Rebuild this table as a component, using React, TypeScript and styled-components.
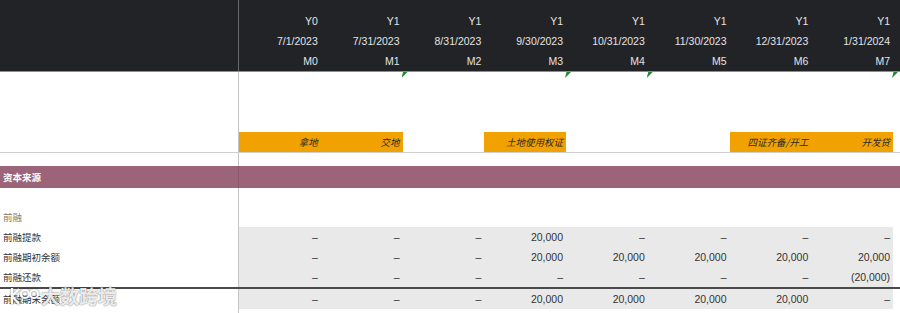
import React from "react";
import styled, { createGlobalStyle, css } from "styled-components";

const Global = createGlobalStyle`
  html, body { margin: 0; padding: 0; background: #ffffff; }
  body { font-family: "Liberation Sans", "Noto Sans CJK SC", sans-serif; }
`;

const COL = 81.75;
const LABEL = 239;

const Sheet = styled.div`
  position: relative;
  width: 900px;
  height: 313px;
  overflow: hidden;
  background: #ffffff;
`;

const Row = styled.div<{ $h: number; $bg?: string; $borderBottom?: string; $borderTop?: string }>`
  display: flex;
  flex: 0 0 auto;
  height: ${(p) => p.$h}px;
  box-sizing: border-box;
  background: ${(p) => p.$bg || "transparent"};
  ${(p) => p.$borderBottom && css`border-bottom: ${p.$borderBottom};`}
  ${(p) => p.$borderTop && css`border-top: ${p.$borderTop};`}
`;

const Label = styled.div<{ $line?: string; $color?: string; $bold?: boolean }>`
  flex: 0 0 ${LABEL}px;
  box-sizing: border-box;
  border-right: 1px solid ${(p) => p.$line || "#c4c4c4"};
  padding-left: 3px;
  display: flex;
  align-items: center;
  font-family: "Noto Sans CJK SC", sans-serif;
  font-size: 9.5px;
  color: ${(p) => p.$color || "#333"};
  font-weight: ${(p) => (p.$bold ? 700 : 400)};
`;

const Cells = styled.div<{ $bg?: string }>`
  display: grid;
  grid-template-columns: repeat(8, ${COL}px);
  background: ${(p) => p.$bg || "transparent"};
`;

const Cell = styled.div`
  position: relative;
  box-sizing: border-box;
  padding-right: 3px;
  display: flex;
  align-items: center;
  justify-content: flex-end;
  font-size: 10.5px;
  color: #333;
  white-space: nowrap;
`;

const Header = styled.div`
  display: flex;
  flex-direction: column;
  height: 72px;
  box-sizing: border-box;
  background-color: #222327;
  border-bottom: 1px solid #8d8d8d;
`;

const HeadCell = styled(Cell)`
  color: #e4e4e4;
`;

const Flag = styled.span`
  position: absolute;
  left: calc(100% - 1px);
  top: calc(100% + 1px);
  width: 6px;
  height: 6px;
  background: #1f8a2e;
  clip-path: polygon(25% 0, 100% 0, 0 100%);
`;

const Milestone = styled(Cell)<{ $on?: boolean }>`
  background: ${(p) => (p.$on ? "#f2a200" : "transparent")};
  font-family: "Noto Sans CJK SC", sans-serif;
  font-style: italic;
  font-size: 9.5px;
  color: #2a2a2a;
`;

const Watermark = styled.div`
  position: absolute;
  left: 8px;
  top: 285px;
  display: flex;
  align-items: center;
  gap: 1px;
  color: rgba(255, 255, 255, 0.9);
  font-family: "Noto Sans CJK SC", sans-serif;
  font-size: 19px;
  line-height: 22px;
  font-weight: 700;
  text-shadow: 0 0 1px rgba(0, 0, 0, 0.55), 0 0 2px rgba(0, 0, 0, 0.25);
  pointer-events: none;
  svg {
    filter: drop-shadow(0 0 1px rgba(0, 0, 0, 0.55));
  }
`;

const years = ["Y0", "Y1", "Y1", "Y1", "Y1", "Y1", "Y1", "Y1"];
const dates = ["7/1/2023", "7/31/2023", "8/31/2023", "9/30/2023", "10/31/2023", "11/30/2023", "12/31/2023", "1/31/2024"];
const months = ["M0", "M1", "M2", "M3", "M4", "M5", "M6", "M7"];
const flagged = [1, 3, 4, 7];

const milestones: { on: boolean; text: string }[] = [
  { on: true, text: "拿地" },
  { on: true, text: "交地" },
  { on: false, text: "" },
  { on: true, text: "土地使用权证" },
  { on: false, text: "" },
  { on: false, text: "" },
  { on: true, text: "四证齐备/开工" },
  { on: true, text: "开发贷" },
];

const D = "–";
const dataRows: { label: string; values: string[] }[] = [
  { label: "前融提款", values: [D, D, D, "20,000", D, D, D, D] },
  { label: "前融期初余额", values: [D, D, D, "20,000", "20,000", "20,000", "20,000", "20,000"] },
  { label: "前融还款", values: [D, D, D, D, D, D, D, "(20,000)"] },
];
const endRow = { label: "前融期末余额", values: [D, D, D, "20,000", "20,000", "20,000", "20,000", D] };

export default function App() {
  return (
    <>
      <Global />
      <Sheet>
        <Header>
          <Row $h={11}>
            <Label $line="#6a6a6a" />
          </Row>
          <Row $h={20}>
            <Label $line="#6a6a6a" />
            <Cells>
              {years.map((y, i) => (
                <HeadCell key={i}>{y}</HeadCell>
              ))}
            </Cells>
          </Row>
          <Row $h={20}>
            <Label $line="#6a6a6a" />
            <Cells>
              {dates.map((d, i) => (
                <HeadCell key={i}>{d}</HeadCell>
              ))}
            </Cells>
          </Row>
          <Row $h={20}>
            <Label $line="#6a6a6a" />
            <Cells>
              {months.map((m, i) => (
                <HeadCell key={i}>
                  {m}
                  {flagged.includes(i) && <Flag />}
                </HeadCell>
              ))}
            </Cells>
          </Row>
        </Header>

        <Row $h={60}>
          <Label />
        </Row>

        <Row $h={21} $borderBottom="1px solid #cfcfcf">
          <Label />
          <Cells>
            {milestones.map((m, i) => (
              <Milestone key={i} $on={m.on}>
                {m.text}
              </Milestone>
            ))}
          </Cells>
        </Row>

        <Row $h={13}>
          <Label />
        </Row>

        <Row $h={22} $bg="#9b6479">
          <Label $line="#8a5669" $color="#ffffff" $bold>
            资本来源
          </Label>
        </Row>

        <Row $h={19}>
          <Label />
        </Row>

        <Row $h={20}>
          <Label $color="#8c7b62">前融</Label>
        </Row>

        {dataRows.map((r) => (
          <Row $h={20} key={r.label}>
            <Label>{r.label}</Label>
            <Cells $bg="#e9e9e9">
              {r.values.map((v, i) => (
                <Cell key={i}>{v}</Cell>
              ))}
            </Cells>
          </Row>
        ))}

        <Row $h={22} $borderTop="2px solid #4a4a4a">
          <Label>{endRow.label}</Label>
          <Cells $bg="#e9e9e9">
            {endRow.values.map((v, i) => (
              <Cell key={i}>{v}</Cell>
            ))}
          </Cells>
        </Row>

        <Row $h={10}>
          <Label />
        </Row>

        <Watermark>
          <svg width="32" height="22" viewBox="0 0 32 22" fill="none" stroke="rgba(255,255,255,0.95)" strokeWidth="2.2">
            <path d="M4 3 L4 19 M4 11 L11 4 M4 11 L11 19" />
            <circle cx="17" cy="9" r="4" />
            <circle cx="26" cy="9" r="4" />
          </svg>
          <span>大数跨境</span>
        </Watermark>
      </Sheet>
    </>
  );
}
